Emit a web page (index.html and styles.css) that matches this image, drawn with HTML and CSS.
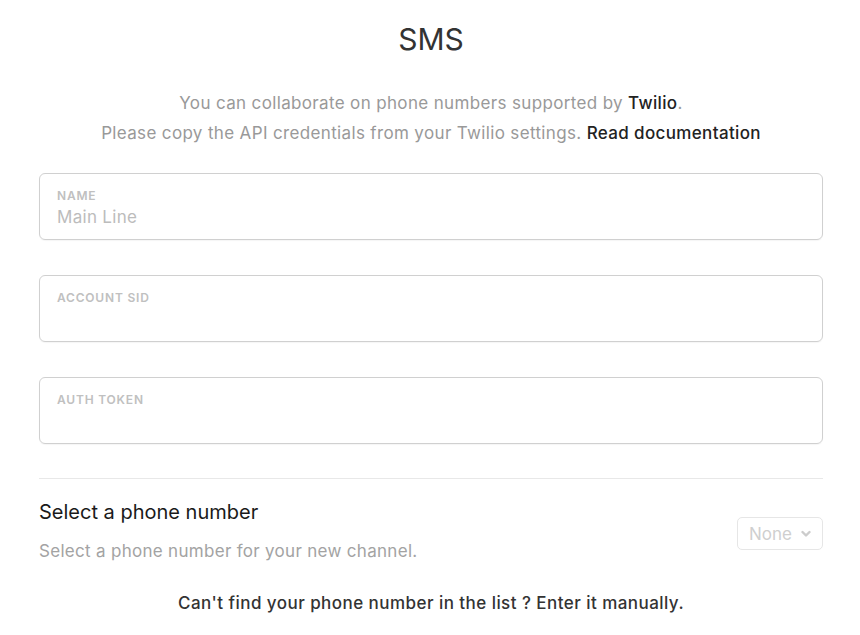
FILE: index.html
```html
<!DOCTYPE html>
<html lang="en">
<head>
    <meta charset="UTF-8">
    <meta name="viewport" content="width=device-width, initial-scale=1.0">
    <title>SMS</title>
    <link rel="stylesheet" href="styles.css">
</head>
<body>
    <div class="container">
        <h1>SMS</h1>
        <p class="intro">
            You can collaborate on phone numbers supported by <strong>Twilio</strong>.<br>
            Please copy the API credentials from your Twilio settings. <a href="#">Read documentation</a>
        </p>
        <form class="fields">
            <label class="field">
                <span class="field-label">Name</span>
                <input type="text" placeholder="Main Line">
            </label>
            <label class="field">
                <span class="field-label">Account SID</span>
                <input type="text">
            </label>
            <label class="field">
                <span class="field-label">Auth Token</span>
                <input type="text">
            </label>
        </form>
        <div class="phone-row">
            <div>
                <h3>Select a phone number</h3>
                <p class="hint">Select a phone number for your new channel.</p>
            </div>
            <button type="button" class="select" disabled>
                None
                <svg width="10" height="8" viewBox="0 0 10 8"><path d="M1.5 2 L5 5.5 L8.5 2" fill="none" stroke="#cccccc" stroke-width="2.4" stroke-linecap="round" stroke-linejoin="round"/></svg>
            </button>
        </div>
        <p class="manual">Can't find your phone number in the list ? Enter it manually.</p>
    </div>
</body>
</html>
```

FILE: styles.css
```css
body {
    margin: 0;
    background-color: #fff;
    font-family: Inter, "Noto Sans", Arial, sans-serif;
    color: #333;
}

.container {
    width: 784px;
    margin: 0 37px 0 39px;
    padding-top: 19px;
}

h1 {
    margin: 0;
    text-align: center;
    font-size: 30px;
    font-weight: 400;
    line-height: 40px;
    color: #333;
}

.intro {
    margin: 29px 0 0;
    text-align: center;
    font-size: 17px;
    line-height: 30px;
    letter-spacing: 0.35px;
    color: #999;
}

.intro strong,
.intro a {
    font-weight: 500;
    color: #222;
    text-decoration: none;
}

.fields {
    margin-top: 25px;
    display: flex;
    flex-direction: column;
    gap: 35px;
}

.field {
    display: block;
    height: 67px;
    box-sizing: border-box;
    padding: 15px 17px 0;
    border: 1.5px solid #d0d0d0;
    border-radius: 6px;
    box-shadow: 0 1px 1px rgba(0, 0, 0, 0.04);
}

.field-label {
    display: block;
    font-size: 12px;
    font-weight: 600;
    letter-spacing: 0.8px;
    text-transform: uppercase;
    color: #c0c0c0;
    line-height: 14px;
}

.field input {
    display: block;
    width: 100%;
    margin-top: 3px;
    padding: 0;
    border: none;
    outline: none;
    font-family: inherit;
    font-size: 17px;
    line-height: 22px;
    letter-spacing: 0.3px;
    color: #333;
}

.field input::placeholder {
    color: #bcbcbc;
}

.phone-row {
    margin-top: 34px;
    padding-top: 19px;
    border-top: 1px solid #e8e8e8;
    display: flex;
    justify-content: space-between;
    align-items: flex-start;
}

h3 {
    margin: 0;
    font-size: 20px;
    font-weight: 400;
    line-height: 28px;
    color: #1a1a1a;
}

.hint {
    margin: 13px 0 0;
    font-size: 17px;
    line-height: 24px;
    letter-spacing: 0.3px;
    color: #a3a3a3;
}

.select {
    display: flex;
    align-items: center;
    gap: 9px;
    height: 33px;
    padding: 0 11px;
    margin-top: 19px;
    background: #fff;
    border: 1px solid #e6e6e6;
    border-radius: 5px;
    font-family: inherit;
    font-size: 17px;
    color: #cfcfcf;
}

.manual {
    margin: 30px 0 0;
    text-align: center;
    font-size: 17px;
    font-weight: 500;
    letter-spacing: 0.45px;
    color: #333;
}
```
